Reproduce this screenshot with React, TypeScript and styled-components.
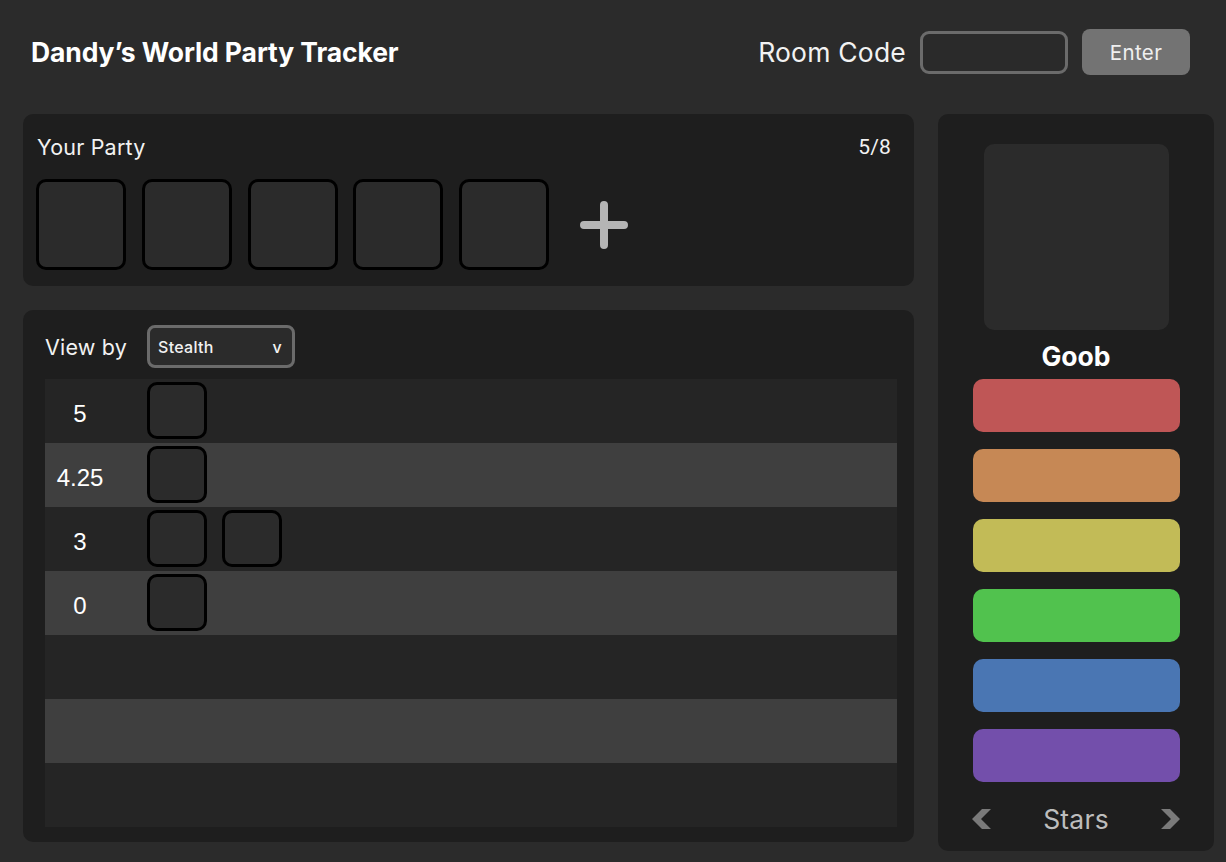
import * as React from 'react';
import styled, { createGlobalStyle } from 'styled-components';

// --- Global ---

const GlobalStyle = createGlobalStyle`
  html, body {
    margin: 0;
    padding: 0;
    background: #2b2b2b;
    font-family: "Inter", "Noto Sans", sans-serif;
    color: #f2f2f2;
  }
  * { box-sizing: border-box; }
`;

// --- Styled Components ---

const Page = styled.div`
  width: 1226px;
  height: 862px;
  overflow: hidden;
`;

const Header = styled.header`
  height: 114px;
  padding: 0 36px 10px 31px;
  display: flex;
  align-items: center;
  justify-content: space-between;
`;

const Title = styled.h1`
  margin: 0;
  font-size: 26.5px;
  font-weight: 700;
  letter-spacing: -0.1px;
  color: #fff;
`;

const RoomControls = styled.div`
  display: flex;
  align-items: center;
  gap: 14px;
`;

const RoomLabel = styled.span`
  font-size: 26.5px;
  letter-spacing: 0.2px;
  color: #f2f2f2;
`;

const CodeInput = styled.input`
  width: 148px;
  height: 43px;
  border: 3px solid #6b6b6b;
  border-radius: 9px;
  background: #2a2a2a;
  outline: none;
  color: #fff;
`;

const EnterButton = styled.button`
  width: 108px;
  height: 46px;
  border: none;
  border-radius: 8px;
  background: #737373;
  color: #efefef;
  font-family: inherit;
  font-size: 20.5px;
  letter-spacing: 0.4px;
`;

const Body = styled.main`
  display: grid;
  grid-template-columns: 891px 276px;
  column-gap: 24px;
  padding: 0 12px 0 23px;
  align-items: start;
`;

const LeftColumn = styled.div`
  display: flex;
  flex-direction: column;
  gap: 24px;
`;

const Panel = styled.section`
  background: #1e1e1e;
  border-radius: 10px;
`;

const PartyPanel = styled(Panel)`
  height: 172px;
  padding: 21px 23px 0 13px;
`;

const PartyHeader = styled.div`
  display: flex;
  justify-content: space-between;
  align-items: center;
  height: 24px;
  padding-left: 1px;
  font-size: 21.5px;
  letter-spacing: 0.2px;
`;

const Count = styled.span`
  font-family: "Roboto", sans-serif;
  font-size: 21px;
`;

const SlotRow = styled.div`
  display: flex;
  align-items: center;
  gap: 15.75px;
  margin-top: 20px;
`;

const Slot = styled.div<{ $w: number; $h: number }>`
  width: ${p => p.$w}px;
  height: ${p => p.$h}px;
  border: 3px solid #000;
  border-radius: 10px;
  background: #2b2b2b;
  flex-shrink: 0;
`;

const AddButton = styled.button`
  margin-left: 15px;
  width: 48px;
  height: 48px;
  padding: 0;
  border: none;
  background: none;
  display: flex;
`;

const ViewPanel = styled(Panel)`
  height: 532px;
  padding: 15px 17px 15px 22px;
  display: flex;
  flex-direction: column;
  gap: 11px;
`;

const ViewControls = styled.div`
  display: flex;
  align-items: center;
  font-size: 21.5px;
  letter-spacing: 0.2px;
`;

const ViewLabel = styled.span`
  width: 102px;
`;

const SelectBox = styled.div`
  width: 148px;
  height: 43px;
  border: 3px solid #6b6b6b;
  border-radius: 8px;
  background: #2b2b2b;
  display: flex;
  align-items: center;
  justify-content: space-between;
  padding: 0 10px 0 8px;
  font-size: 16px;
  font-weight: 500;
  letter-spacing: 0.3px;
`;

const Table = styled.div`
  display: flex;
  flex-direction: column;
`;

const TierRow = styled.div<{ $alt: boolean }>`
  height: 64px;
  display: flex;
  align-items: flex-start;
  padding-top: 3px;
  background: ${p => (p.$alt ? '#3f3f3f' : '#252525')};
`;

const TierLabel = styled.div`
  width: 70px;
  height: 56px;
  display: flex;
  align-items: center;
  justify-content: center;
  padding-top: 7px;
  font-family: "Liberation Sans", Arial, sans-serif;
  font-size: 24px;
  color: #fff;
`;

const TierChips = styled.div`
  margin-left: 32px;
  display: flex;
  gap: 15px;
`;

const SidePanel = styled(Panel)`
  height: 737px;
  padding-top: 30px;
  display: flex;
  flex-direction: column;
  align-items: center;
`;

const Portrait = styled.div`
  width: 185px;
  height: 186px;
  border-radius: 10px;
  background: #2b2b2b;
`;

const Name = styled.div`
  margin-top: 8px;
  height: 36px;
  line-height: 36px;
  font-size: 26.5px;
  font-weight: 700;
  color: #fff;
`;

const Bars = styled.div`
  margin-top: 5px;
  display: flex;
  flex-direction: column;
  gap: 17px;
`;

const StatBar = styled.div<{ $color: string }>`
  width: 207px;
  height: 53px;
  border-radius: 10px;
  background: ${p => p.$color};
`;

const StatNav = styled.div`
  margin-top: 21px;
  width: 212px;
  display: flex;
  align-items: center;
  justify-content: space-between;
`;

const NavArrow = styled.button`
  width: 22px;
  height: 24px;
  padding: 0;
  border: none;
  background: none;
  display: flex;
`;

const StatName = styled.span`
  font-size: 26.5px;
  letter-spacing: 0.2px;
  color: #bdbdbd;
`;

// --- Data ---

const tiers: { label: string; count: number }[] = [
  { label: '5', count: 1 },
  { label: '4.25', count: 1 },
  { label: '3', count: 2 },
  { label: '0', count: 1 },
  { label: '', count: 0 },
  { label: '', count: 0 },
  { label: '', count: 0 },
];

const statColors = ['#bf5656', '#c68855', '#c2bb57', '#51c24e', '#4a76b3', '#734fab'];

function App() {
  return (
    <Page>
      <GlobalStyle />
      <Header>
        <Title>Dandy’s World Party Tracker</Title>
        <RoomControls>
          <RoomLabel>Room Code</RoomLabel>
          <CodeInput aria-label="Room code" />
          <EnterButton>Enter</EnterButton>
        </RoomControls>
      </Header>
      <Body>
        <LeftColumn>
          <PartyPanel>
            <PartyHeader>
              <span>Your Party</span>
              <Count>5/8</Count>
            </PartyHeader>
            <SlotRow>
              {[0, 1, 2, 3, 4].map(i => (
                <Slot key={i} $w={90} $h={91} />
              ))}
              <AddButton aria-label="Add member">
                <svg width="48" height="48" viewBox="0 0 48 48">
                  <path d="M24 4 V44 M4 24 H44" stroke="#b5b5b5" strokeWidth="8" strokeLinecap="round" />
                </svg>
              </AddButton>
            </SlotRow>
          </PartyPanel>
          <ViewPanel>
            <ViewControls>
              <ViewLabel>View by</ViewLabel>
              <SelectBox>
                <span>Stealth</span>
                <span>v</span>
              </SelectBox>
            </ViewControls>
            <Table>
              {tiers.map((t, i) => (
                <TierRow key={i} $alt={i % 2 === 1}>
                  <TierLabel>{t.label}</TierLabel>
                  <TierChips>
                    {Array.from({ length: t.count }).map((_, j) => (
                      <Slot key={j} $w={60} $h={57} />
                    ))}
                  </TierChips>
                </TierRow>
              ))}
            </Table>
          </ViewPanel>
        </LeftColumn>
        <SidePanel>
          <Portrait />
          <Name>Goob</Name>
          <Bars>
            {statColors.map(c => (
              <StatBar key={c} $color={c} />
            ))}
          </Bars>
          <StatNav>
            <NavArrow aria-label="Previous stat">
              <svg width="22" height="24" viewBox="0 0 22 24">
                <polygon points="12,2 21,2 11,12 21,22 12,22 2,12" fill="#7a7a7a" />
              </svg>
            </NavArrow>
            <StatName>Stars</StatName>
            <NavArrow aria-label="Next stat">
              <svg width="22" height="24" viewBox="0 0 22 24">
                <polygon points="10,2 1,2 11,12 1,22 10,22 20,12" fill="#7a7a7a" />
              </svg>
            </NavArrow>
          </StatNav>
        </SidePanel>
      </Body>
    </Page>
  );
}

export default App;
